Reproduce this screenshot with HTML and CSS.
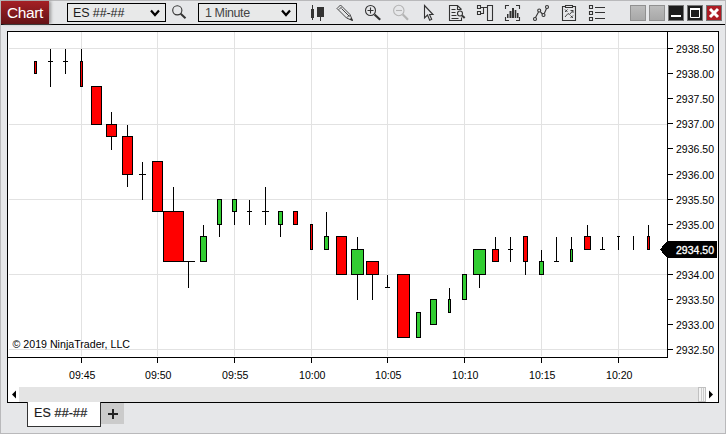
FILE: index.html
```html
<!DOCTYPE html>
<html lang="en">
<head>
<meta charset="utf-8">
<title>Chart</title>
<link rel="stylesheet" href="styles.css">
</head>
<body>
<div class="window">
  <header class="toolbar">
    <div class="title">Chart</div>
    <div class="select instrument"><span>ES ##-##</span><svg class="chevron" viewBox="0 0 10 8"><path d="M1 1.5l4 4.5l4-4.5"/></svg></div>
    <svg class="icon search" viewBox="166 1 32 23"><circle cx="177.3" cy="10.3" r="4.6"/><path d="M180.7 13.7l4.8 4.6" stroke-width="2"/></svg>
    <div class="select interval"><span>1 Minute</span><svg class="chevron" viewBox="0 0 10 8"><path d="M1 1.5l4 4.5l4-4.5"/></svg></div>
    <div class="tools">
      <svg class="icon" viewBox="303 1 28 23"><path class="solid" d="M311 9h3v9h-3zM312 5h1v15h-1zM317 7h7v10h-7zM320 17h1v4h-1z"/></svg>
      <svg class="icon" viewBox="331 1 28 23"><path d="M338 7.500l2.500-2.500l9.500 9.500l2.500 6l-6-2.500l-9.500-9.500zM339 9.500l2.500-2.500M341.500 8.500l8 8M347 17.500l2.500-2.500" stroke-width=".9"/><path class="solid" d="M349.500 19.500l3.500 1.500l-1.500-3.500z"/></svg>
      <svg class="icon" viewBox="359 1 28 23"><circle cx="370.5" cy="10.5" r="5"/><path d="M367.5 10.5h6M370.5 7.5v6"/><path d="M374.5 14.5l5.7 5.2" stroke-width="2.2"/></svg>
      <svg class="icon disabled" viewBox="387 1 28 23"><circle cx="398.8" cy="10.5" r="5.2"/><path d="M396 10.5h6"/><path d="M402.8 14.5l5.2 5.2" stroke-width="2.2"/></svg>
      <svg class="icon" viewBox="415 1 28 23"><path d="M424.5 5.500v12.500l3-3l2.200 5.200l2-.9l-2.200-4.800h3.500z"/></svg>
      <svg class="icon" viewBox="443 1 28 23"><path d="M461.5 17.500v3h-12v-15h8l4 4M457.5 5.500v4h4M451.500 9.500h4M451.500 12.500h4M451.500 15.500h5M451.500 18.500h7"/><circle cx="460" cy="13.5" r="2.500"/><path d="M462 15.500l2.700 2.500" stroke-width="2"/></svg>
      <svg class="icon" viewBox="471 1 28 23"><path d="M477.5 5.500h3v3h-3zM477.5 11.500h3v3h-3zM487.5 5.500h5v15h-5zM480.5 7.500h7M480.5 13.500h3v-6"/></svg>
      <svg class="icon" viewBox="499 1 28 23"><path d="M509 5.500h-3.500v3.500M516 5.500h3.500v3.500M505.5 17v3.500h3.500M519.5 17v3.500h-3.500"/><path class="solid" d="M507 14h1.500v4h-1.500zM509.500 11h2v7h-2zM512 8h2v10h-2zM514.700 10h1.600v8h-1.600zM517 13h1.500v5h-1.500z"/></svg>
      <svg class="icon" viewBox="527 1 28 23"><path d="M535.500 17.500l3-5.500M540.500 12l2 2M544.300 13.500l2.200-5"/><circle cx="535" cy="19" r="1.5"/><circle cx="539.200" cy="10.500" r="1.5"/><circle cx="543.500" cy="15" r="1.5"/><circle cx="547" cy="7" r="1.5"/></svg>
      <svg class="icon" viewBox="555 1 28 23"><path d="M565 6.500h-2.500v14h13v-14h-2.500M565.500 5.500h7v2h-7z"/><path d="M565 9.500l2.500 2.500M567.500 9.500l-2.500 2.500M570.500 10.500h2.500v2.500M573 10.500l-3.500 4l-1.500-1l-3 3.500M570.500 15.500l2.500 2.500M573 15.500l-2.500 2.500" stroke-width=".9"/></svg>
      <svg class="icon" viewBox="583 1 28 23"><path d="M589.5 5.500h3v3h-3zM589.5 11.500h3v3h-3zM589.5 17.500h3v3h-3zM595 7.500h10M595 12.500h10M595 18.500h10"/></svg>
    </div>
    <div class="controls">
      <i class="control blank"></i><i class="control blank"></i>
      <i class="control dark"><svg viewBox="0 0 16 16"><path d="M3 11h10" stroke-width="2"/></svg></i>
      <i class="control dark"><svg viewBox="0 0 16 16"><path d="M3.500 4.500h9v8h-9z"/><path d="M3 4h10" stroke-width="2"/></svg></i>
      <i class="control close"><svg viewBox="0 0 16 16"><path d="M4 4l8 8M12 4l-8 8" stroke-width="3"/></svg></i>
    </div>
  </header>
  <main class="panel">
    <svg class="chart" id="chart" viewBox="8 32 710 355"></svg>
    <div class="scrollbar">
      <div class="arrow"><svg viewBox="0 0 10 14"><path d="M7 3v8l-4-4z"/></svg></div>
      <div class="track"></div>
      <div class="thumb"></div>
      <div class="arrow right"><svg viewBox="0 0 10 14"><path d="M3 3v8l4-4z"/></svg></div>
    </div>
  </main>
  <footer class="tabs">
    <div class="tab">ES ##-##</div>
    <div class="add"><svg viewBox="0 0 10 10"><path d="M5 0v10M0 5h10"/></svg></div>
  </footer>
</div>
<script src="chart.js"></script>
</body>
</html>
```

FILE: styles.css
```css
* { box-sizing: border-box; }
body {
  margin: 0;
  font-family: "Liberation Sans", Arial, sans-serif;
  color: #1c1c1c;
}
.window {
  width: 726px;
  height: 434px;
  border: 1px solid #b9b9bb;
  background: #e6e7e9;
  display: flex;
  flex-direction: column;
}
.toolbar {
  height: 24px;
  flex: none;
  display: flex;
  border-bottom: 1px solid #000;
}
.title {
  width: 48px;
  height: 23px;
  padding-left: 6px;
  line-height: 24px;
  font-size: 15.5px;
  letter-spacing: -.4px;
  color: #fff;
  background: linear-gradient(#a52025, #641216);
  box-shadow: 2px 0 3px #999;
}
.select {
  width: 99px;
  height: 19px;
  margin-top: 2px;
  padding: 0 5px;
  border: 1px solid #000;
  display: flex;
  align-items: center;
  justify-content: space-between;
  font-size: 12.5px;
  letter-spacing: -.1px;
  line-height: 18px;
  background: #e8e9e9;
}
.instrument { margin-left: 18px; }
.interval { padding-left: 6px; color: #444; letter-spacing: -.4px; }
.chevron { width: 10px; height: 8px; fill: none; stroke: #000; stroke-width: 2.2; }
.icon { width: 28px; height: 23px; display: block; fill: none; stroke: #333; stroke-width: 1.1; }
.icon .solid { fill: #333; stroke: none; }
.search { width: 32px; }
.disabled { stroke: #b4b4b4; }
.tools { display: flex; margin-left: 6px; }
.controls { display: flex; gap: 3px; margin: 4px 0 0 19px; }
.control { width: 16px; height: 16px; border: 1px solid #777; display: block; }
.control svg { display: block; width: 16px; height: 16px; margin: -1px; fill: none; stroke: #fff; }
.blank { background: linear-gradient(#bcbcbc, #a8a8a8); border-color: #909090; }
.dark { background: #1c1c1c; }
.close { background: #ad1c24; }
.panel {
  width: 712px;
  height: 372px;
  flex: none;
  margin: 6px 0 0 6px;
  border: 1px solid #000;
  background: #fff;
}
.chart { display: block; width: 710px; height: 355px; shape-rendering: crispEdges; }
.chart text { font-size: 11.5px; fill: #000; }
.grid { stroke: #e2e2e2; fill: none; }
.line { stroke: #000; fill: none; }
.down { fill: #f00; stroke: #000; }
.up { fill: #32cd32; stroke: #000; }
.marker { fill: #000; }
.chart .marker-text { fill: #fff; stroke: #fff; stroke-width: .35px; }
.scrollbar { height: 15px; display: flex; padding: 0 1px; }
.arrow { width: 10px; background: #fff; }
.arrow.right { width: 11px; }
.arrow svg { display: block; width: 10px; height: 15px; }
.track { flex: 1; background: #e4e4e4; }
.thumb {
  width: 8px;
  border: 1px solid #c0c0c0;
  background: linear-gradient(90deg, #f3f3f3 2px, #ccc 2px 3px, #f3f3f3 3px 4px, #ccc 4px 5px, #f3f3f3 5px);
}
.tabs { display: flex; padding-left: 26px; }
.tab {
  width: 74px;
  height: 25px;
  margin-top: -1px;
  padding-left: 6px;
  border: 1px solid #333;
  border-top: 0;
  background: #fff;
  font-size: 12.5px;
  line-height: 23px;
  letter-spacing: .15px;
  -webkit-text-stroke: .2px #1c1c1c;
}
.add { width: 23px; height: 21px; background: #cbcbcb; display: grid; place-items: center; }
.add svg { width: 10px; height: 10px; stroke: #222; stroke-width: 2; }
```

FILE: chart.js
```js
// Candles: [wick x, high y, low y, body left, body top, body width, body height, kind]
const candles = [
  [35,61,74,34,61,3,13,'d'],[50,49,87,48,61,5,0],[65,49,74,63,61,5,0],
  [81,49,87,80,61,3,26,'d'],[96,86,125,91,86,11,39,'d'],[111,112,150,106,124,11,13,'d'],
  [127,125,187,122,136,11,39,'d'],[142,162,200,139,174,7,0],[157,161,212,152,161,11,51,'d'],
  [173,187,262,163,211,21,51,'d'],[188,261,288,183,261,12,0],[203,225,262,200,236,7,26,'u'],
  [219,199,237,217,199,5,26,'u'],[234,199,225,232,199,5,13,'u'],[249,200,225,247,211,5,0],
  [265,187,225,262,211,7,0],[280,211,237,278,211,5,14,'u'],[295,211,225,293,211,5,14,'d'],
  [311,224,250,310,224,3,26,'d'],[326,212,250,324,236,5,14,'u'],[341,236,275,336,236,11,39,'d'],
  [357,237,300,351,249,13,26,'u'],[372,261,300,366,261,13,14,'d'],[387,275,288,385,287,5,0],
  [403,274,338,397,274,13,64,'d'],[418,312,338,416,312,5,26,'u'],[433,299,325,430,299,7,26,'u'],
  [449,288,313,448,299,3,14,'u'],[464,274,300,462,274,5,26,'u'],[479,249,288,473,249,13,26,'u'],
  [495,237,262,492,249,7,13,'d'],[510,237,262,508,249,5,0],[525,236,275,523,236,5,26,'d'],
  [541,250,275,539,261,5,14,'u'],[556,237,262,554,261,5,0],[571,237,262,570,249,3,13,'u'],
  [587,225,250,584,236,7,14,'d'],[602,237,250,600,249,5,0],[618,236,250,617,236,3,0],
  [633,236,250,633,236,1,0],[648,225,250,647,236,3,14,'d']
];
const times = [['09:45',81],['09:50',157],['09:55',234],['10:00',311],['10:05',387],['10:10',464],['10:15',541],['10:20',618]];

let out = '';
const path = (cls, d) => { out += `<path class="${cls}" d="${d}"/>`; };
const label = (x, y, w, s, cls = '') => {
  out += `<text class="${cls}" x="${x}" y="${y}" textLength="${w}" lengthAdjust="spacingAndGlyphs">${s}</text>`;
};

for (const y of [48, 124, 199, 274, 349]) path('grid', `M9 ${y + .5}H667`);
for (const [, x] of times) path('grid', `M${x + .5} 32V356`);

for (const [x, hi, lo, bx, by, w, h, kind] of candles) {
  path('line', `M${x + .5} ${hi}V${lo}`);
  if (h) out += `<rect class="${kind === 'u' ? 'up' : 'down'}" x="${bx + .5}" y="${by + .5}" width="${w - 1}" height="${h - 1}"/>`;
  else path('line', `M${bx} ${by + .5}h${w}`);
}

path('line', 'M667.5 32V357.5H8');
for (let i = 0; i <= 12; i++) {
  const y = Math.round(48 + i * 25.1);
  path('line', `M668 ${y + .5}h5`);
  if (i !== 8) label(676, y + 4.5, 38, (2938.5 - i * .5).toFixed(2));
}
for (const [s, x] of times) {
  path('line', `M${x + .5} 358v5`);
  label(x - 12, 379, 26.5, s);
}
path('marker', 'M660 249.500L667 241H717V258H667z');
label(676, 254, 38, '2934.50', 'marker-text');
label(12.5, 348, 117.5, '© 2019 NinjaTrader, LLC');

document.getElementById('chart').innerHTML = out;
```
